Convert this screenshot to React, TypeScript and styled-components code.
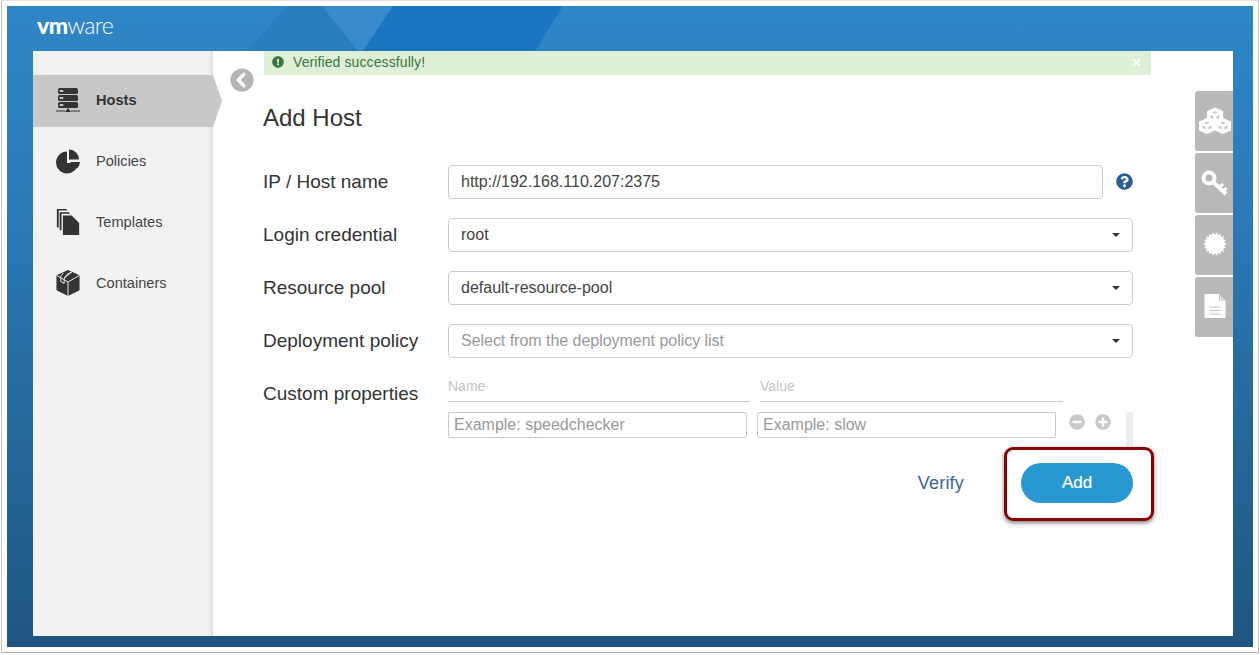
import React from "react";
import styled, { createGlobalStyle } from "styled-components";
import {
  FaChevronCircleLeft,
  FaExclamationCircle,
  FaQuestionCircle,
  FaMinusCircle,
  FaPlusCircle,
  FaTimes,
} from "react-icons/fa";

const Global = createGlobalStyle`
  html, body { margin: 0; padding: 0; background: #fff; overflow: hidden; }
  * { box-sizing: border-box; }
  body { font-family: "Liberation Sans", Arial, sans-serif; color: #333; }
`;

const Frame = styled.div`
  width: 1258px;
  height: 653px;
  margin-left: 1px;
  border: 1px solid #c4c4c4;
  border-top-color: #e2e2e2;
  border-bottom-color: #aaa;
  padding: 5px;
  background: #fff;
`;

const Backdrop = styled.div`
  height: 641px;
  display: flex;
  flex-direction: column;
  background: linear-gradient(180deg, #2f86c6 0%, #2b78b4 35%, #1f5680 100%);
  padding-bottom: 11px;
`;

const Header = styled.header`
  position: relative;
  height: 45px;
  flex: none;
  padding: 6px 0 0 30px;
  overflow: hidden;
`;

const HeaderArt = styled.svg`
  position: absolute;
  left: 0;
  top: 0;
`;

const Logo = styled.div`
  position: relative;
  font-family: "Lato", "Liberation Sans", sans-serif;
  font-size: 23px;
  line-height: 26px;
  color: #fff;
  letter-spacing: -0.6px;
  b { font-weight: 900; }
  span { font-weight: 300; }
`;

const Panel = styled.div`
  flex: 1;
  margin: 0 20px 0 26px;
  display: flex;
  background: #fff;
  min-height: 0;
`;

const Sidebar = styled.nav`
  width: 180px;
  flex: none;
  background: #f2f2f2;
  padding-top: 24px;
  display: flex;
  flex-direction: column;
  gap: 9px;
  box-shadow: inset -5px 0 5px -4px #d2d2d2;
`;

const NavItem = styled.div<{ $active?: boolean }>`
  position: relative;
  height: 52px;
  display: flex;
  align-items: center;
  gap: 16px;
  padding: 0 0 2px 23px;
  font-size: 14.6px;
  color: ${(p) => (p.$active ? "#333" : "#444")};
  font-weight: ${(p) => (p.$active ? 700 : 400)};
  background: ${(p) => (p.$active ? "#c8c8c8" : "transparent")};
  ${(p) =>
    p.$active
      ? `&::after {
    content: "";
    position: absolute;
    left: 100%;
    top: 0;
    width: 9px;
    height: 52px;
    background: #c8c8c8;
    clip-path: polygon(0 0, 100% 50%, 0 100%);
  }`
      : ""}
`;

const NavIcon = styled.svg`
  width: 24px;
  height: 26px;
  flex: none;
  fill: #333;
`;

const Content = styled.main`
  position: relative;
  flex: 1;
  min-width: 0;
`;

const BackButton = styled.div`
  position: absolute;
  left: 17px;
  top: 17px;
  color: #b5b5b5;
  font-size: 24px;
  line-height: 0;
  background: #fff;
  border-radius: 50%;
`;

const Alert = styled.div`
  margin-left: 51px;
  height: 24px;
  display: flex;
  align-items: center;
  gap: 9px;
  padding: 0 9px 2px 8px;
  background: #dff0d8;
  color: #3c763d;
  font-size: 14px;
  letter-spacing: 0.1px;
  border-radius: 0 0 2px 2px;
  svg { flex: none; }
`;

const AlertText = styled.span`
  flex: 1;
`;

const Title = styled.h1`
  margin: 0 0 32px 50px;
  padding-top: 28px;
  font-size: 24px;
  line-height: 30px;
  font-weight: 400;
  color: #333;
`;

const Form = styled.form`
  margin-left: 50px;
  width: 870px;
  display: grid;
  grid-template-columns: 185px 1fr;
  row-gap: 19px;
  align-items: start;
`;

const Label = styled.label`
  font-size: 19px;
  line-height: 34px;
  color: #333;
`;

const FieldRow = styled.div`
  display: flex;
  align-items: center;
  gap: 13px;
`;

const TextField = styled.div`
  flex: 1;
  height: 34px;
  display: flex;
  align-items: center;
  justify-content: space-between;
  padding: 0 16px 0 12px;
  border: 1px solid #ccc;
  border-radius: 4px;
  font-size: 16px;
  color: #444;
  background: #fff;
`;

const Placeholder = styled.span`
  color: #999;
  letter-spacing: -0.03px;
`;

const Caret = styled.i`
  width: 0;
  height: 0;
  border-left: 4px solid transparent;
  border-right: 4px solid transparent;
  border-top: 4px solid #333;
  margin-right: -4px;
`;

const Help = styled.div`
  color: #2a5d94;
  font-size: 17px;
  line-height: 0;
  margin-top: -2px;
`;

const Properties = styled.div`
  display: flex;
  flex-direction: column;
`;

const PropHead = styled.div`
  display: grid;
  grid-template-columns: 302px 303px;
  column-gap: 10px;
  height: 25px;
`;

const PropHeadCell = styled.div`
  border-bottom: 1px solid #c8c8c8;
  font-size: 14px;
  line-height: 18px;
  color: #c4c4c4;
`;

const PropRow = styled.div`
  display: flex;
  align-items: flex-start;
  margin-top: 10px;
  height: 35px;
`;

const PropInput = styled.div`
  width: 299px;
  height: 26px;
  margin-right: 10px;
  padding-left: 5px;
  border: 1px solid #c8c8c8;
  border-radius: 2px;
  font-size: 16px;
  line-height: 24px;
  color: #999;
`;

const RoundIcons = styled.div`
  display: flex;
  gap: 10px;
  margin-left: 3px;
  margin-top: 2px;
  color: #c8c8c8;
  font-size: 16px;
  line-height: 0;
`;

const ScrollStub = styled.div`
  margin-left: auto;
  width: 7px;
  height: 35px;
  background: #eee;
`;

const Actions = styled.div`
  grid-column: 1 / -1;
  display: flex;
  justify-content: flex-end;
  align-items: center;
  gap: 57px;
  margin-top: -3px;
`;

const VerifyLink = styled.a`
  font-size: 18px;
  letter-spacing: 0.2px;
  color: #3a6496;
`;

const AddWrap = styled.div`
  position: relative;
`;

const AddButton = styled.button`
  width: 112px;
  height: 40px;
  border: 0;
  border-radius: 20px;
  background: #2a98d0;
  color: #fff;
  font: 400 17px "Liberation Sans", Arial, sans-serif;
  -webkit-text-stroke: 0.2px #fff;
`;

const Highlight = styled.div`
  position: absolute;
  left: -17px;
  top: -16px;
  width: 150px;
  height: 74px;
  border: 3px solid #840406;
  border-radius: 9px;
  box-shadow: 0 2px 4px rgba(0, 0, 0, 0.5);
  pointer-events: none;
`;

const Rail = styled.aside`
  width: 82px;
  flex: none;
  padding-top: 40px;
  display: flex;
  flex-direction: column;
  align-items: flex-end;
  gap: 2px;
`;

const RailTab = styled.div`
  width: 38px;
  height: 60px;
  background: #b9b9b9;
  border-radius: 3px 0 0 3px;
  display: flex;
  align-items: center;
  justify-content: center;
  padding-left: 2px;
`;

const RailIcon = styled.svg`
  width: 32px;
  height: 32px;
  flex: none;
`;

/* One isometric cube of the rail icon: a white hexagon with shaded faces. */
function Cube({ x, y }: { x: number; y: number }) {
  return (
    <g transform={`translate(${x} ${y})`}>
      <polygon points="0,-7.5 7.5,-4 7.5,4 0,7.5 -7.5,4 -7.5,-4" fill="#fff" stroke="#fff" strokeWidth="1.2" strokeLinejoin="round" />
      <polygon points="0,-4.2 2.8,-3 0,-1.8 -2.8,-3" fill="#c8c8c8" />
      <polygon points="-4.5,-0.6 -1.5,0.7 -1.5,3.6 -4.5,2.3" fill="#c8c8c8" />
      <polygon points="4.5,-0.6 1.5,0.7 1.5,3.6 4.5,2.3" fill="#c8c8c8" />
    </g>
  );
}

function spikyCircle(cx: number, cy: number, outer: number, inner: number, teeth: number) {
  const pts: string[] = [];
  for (let i = 0; i < teeth * 2; i++) {
    const r = i % 2 === 0 ? outer : inner;
    const a = (Math.PI * i) / teeth;
    pts.push(`${(cx + r * Math.cos(a)).toFixed(2)},${(cy + r * Math.sin(a)).toFixed(2)}`);
  }
  return pts.join(" ");
}

export default function App() {
  return (
    <>
      <Global />
      <Frame>
        <Backdrop>
          <Header>
            <HeaderArt width="1246" height="45" viewBox="0 0 1246 45">
              <polygon points="280,0 315,0 352,45 240,45" fill="#2a7dbd" />
              <polygon points="315,0 386,0 356,45 351,45" fill="#3a8bcb" />
              <polygon points="386,0 556,0 528,45 356,45" fill="#1c75c0" />
            </HeaderArt>
            <Logo>
              <b>vm</b>
              <span>ware</span>
            </Logo>
          </Header>
          <Panel>
            <Sidebar>
              <NavItem $active>
                <NavIcon viewBox="0 0 24 26">
                  <rect x="2" y="1" width="20" height="6" rx="1.5" />
                  <rect x="2" y="8" width="20" height="6" rx="1.5" />
                  <rect x="2" y="15" width="20" height="6" rx="1.5" />
                  <rect x="0" y="23.5" width="9" height="1" />
                  <rect x="15" y="23.5" width="9" height="1" />
                  <polygon points="12,21 15,25 9,25" />
                  <g fill="#c8c8c8">
                    <rect x="3.5" y="3" width="4" height="2" rx="1" />
                    <rect x="3.5" y="10" width="4" height="2" rx="1" />
                    <rect x="3.5" y="17" width="4" height="2" rx="1" />
                  </g>
                </NavIcon>
                Hosts
              </NavItem>
              <NavItem>
                <NavIcon viewBox="0 0 24 26">
                  <path d="M11 3.5A11 11 0 1 0 22 15H11z" />
                  <path d="M13 1.5A10 10 0 0 1 23 11.5H13z" />
                  <path d="M14 14h10a11 11 0 0 1-3 6.5z" />
                </NavIcon>
                Policies
              </NavItem>
              <NavItem>
                <NavIcon viewBox="0 0 24 28">
                  <path d="M0 0h10l1.5 1.5H2V20H0z" />
                  <path d="M3 3.5h10l1.5 1.5H5V23H3z" />
                  <path d="M6.5 7H16l8 8v13H6.5z" />
                </NavIcon>
                Templates
              </NavItem>
              <NavItem>
                <NavIcon viewBox="0 0 24 27">
                  <path d="M12 0l12 5.5V21l-12 6-12-6V5.500z" />
                  <path
                    d="M12 27V12.500l12-7M12 12.500L0 5.500M7 3L4.500 6.500V12l3.500 2V8.500l3-4 5-2.500"
                    fill="none"
                    stroke="#f2f2f2"
                    strokeWidth="1"
                  />
                  <path d="M8 8.500l8-6.500" fill="none" stroke="#f2f2f2" strokeWidth="1" />
                </NavIcon>
                Containers
              </NavItem>
            </Sidebar>
            <Content>
              <BackButton>
                <FaChevronCircleLeft />
              </BackButton>
              <Alert>
                <FaExclamationCircle size={12} />
                <AlertText>Verified successfully!</AlertText>
                <FaTimes size={11} color="#fff" />
              </Alert>
              <Title>Add Host</Title>
              <Form>
                <Label>IP / Host name</Label>
                <FieldRow>
                  <TextField>http://192.168.110.207:2375</TextField>
                  <Help>
                    <FaQuestionCircle />
                  </Help>
                </FieldRow>
                <Label>Login credential</Label>
                <TextField>
                  root
                  <Caret />
                </TextField>
                <Label>Resource pool</Label>
                <TextField>
                  default-resource-pool
                  <Caret />
                </TextField>
                <Label>Deployment policy</Label>
                <TextField>
                  <Placeholder>Select from the deployment policy list</Placeholder>
                  <Caret />
                </TextField>
                <Label>Custom properties</Label>
                <Properties>
                  <PropHead>
                    <PropHeadCell>Name</PropHeadCell>
                    <PropHeadCell>Value</PropHeadCell>
                  </PropHead>
                  <PropRow>
                    <PropInput>Example: speedchecker</PropInput>
                    <PropInput>Example: slow</PropInput>
                    <RoundIcons>
                      <FaMinusCircle />
                      <FaPlusCircle />
                    </RoundIcons>
                    <ScrollStub />
                  </PropRow>
                </Properties>
                <Actions>
                  <VerifyLink>Verify</VerifyLink>
                  <AddWrap>
                    <AddButton type="button">Add</AddButton>
                    <Highlight />
                  </AddWrap>
                </Actions>
              </Form>
            </Content>
            <Rail>
              <RailTab>
                <RailIcon viewBox="0 0 32 32">
                  <Cube x={16} y={10.5} />
                  <Cube x={8} y={21} />
                  <Cube x={24} y={21} />
                </RailIcon>
              </RailTab>
              <RailTab>
                <RailIcon viewBox="0 0 32 32">
                  <circle cx="10" cy="11" r="5.5" fill="none" stroke="#fff" strokeWidth="4" />
                  <path d="M14 15L27 27" stroke="#fff" strokeWidth="4" fill="none" />
                  <path d="M20 20.500l4-3.500M24 24l3.500-3" stroke="#fff" strokeWidth="3" fill="none" />
                </RailIcon>
              </RailTab>
              <RailTab>
                <RailIcon viewBox="0 0 32 32">
                  <polygon points={spikyCircle(16, 15, 11.5, 9.5, 18)} fill="#fff" />
                </RailIcon>
              </RailTab>
              <RailTab>
                <RailIcon viewBox="0 0 32 32">
                  <path d="M5.500 3H20l6.500 6.500V27H5.500z" fill="#fff" />
                  <path d="M20 3l6.500 6.500H20z" fill="#b9b9b9" />
                  <path d="M20.800 4.500L25 9H20.800z" fill="#e8e8e8" />
                  <path d="M10.500 16h11M10.500 19.500h11M10.500 23h11" stroke="#c4c4c4" strokeWidth="1" />
                </RailIcon>
              </RailTab>
            </Rail>
          </Panel>
        </Backdrop>
      </Frame>
    </>
  );
}
